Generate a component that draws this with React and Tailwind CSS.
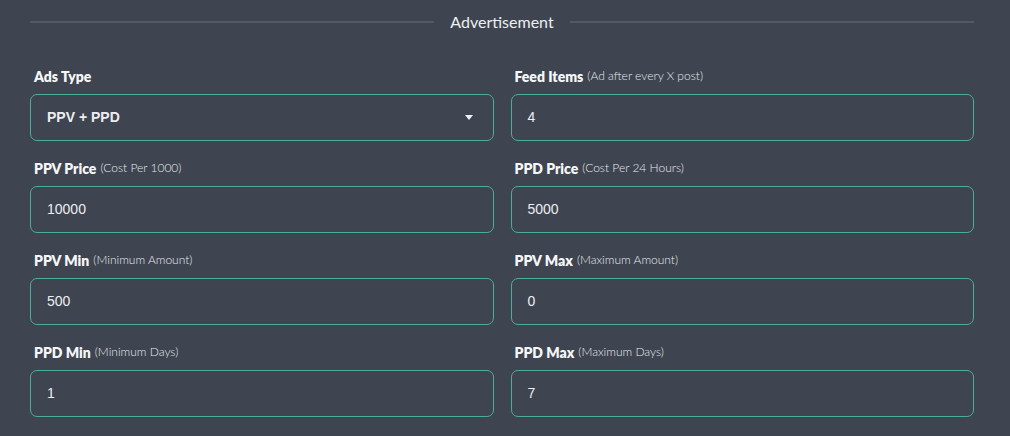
import React from "react";

const fields = [
  { label: "Ads Type", sub: null, value: "PPV + PPD", select: true },
  { label: "Feed Items", sub: "(Ad after every X post)", value: "4" },
  { label: "PPV Price", sub: "(Cost Per 1000)", value: "10000" },
  { label: "PPD Price", sub: "(Cost Per 24 Hours)", value: "5000" },
  { label: "PPV Min", sub: "(Minimum Amount)", value: "500" },
  { label: "PPV Max", sub: "(Maximum Amount)", value: "0" },
  { label: "PPD Min", sub: "(Minimum Days)", value: "1" },
  { label: "PPD Max", sub: "(Maximum Days)", value: "7" },
];

function Field({ f }) {
  return (
    <div className="flex flex-col">
      <div className="h-5 flex items-center pl-1 mb-2 whitespace-nowrap">
        <span className="text-[14px] font-extrabold text-[#f5f6f7]">{f.label}</span>
        {f.sub && (
          <span className="ml-1 text-[12px] font-light text-[#e8eaed]">{f.sub}</span>
        )}
      </div>
      <div className="h-[47px] rounded-[7px] border border-[#4dae98] flex items-center justify-between pl-4 pr-4 font-['Liberation_Sans',sans-serif] text-[14px] text-[#eceef1]">
        <span className={f.select ? "font-semibold" : ""}>{f.value}</span>
        {f.select && (
          <svg width="8" height="5" viewBox="0 0 8 5" className="mr-[4px]">
            <path d="M0 0 L8 0 L4 5 Z" fill="#f1f2f4" />
          </svg>
        )}
      </div>
    </div>
  );
}

export default function App() {
  return (
    <div className="w-[1010px] h-[436px] bg-[#3e4450] font-['Lato',sans-serif] overflow-hidden">
      <div className="pl-[30px] pr-[36px]">
        <div className="flex items-center h-6 mt-[10px] mb-8">
          <div className="flex-1 h-[2px] bg-[#525864]"></div>
          <span className="px-4 text-[16px] text-[#eef0f2]">Advertisement</span>
          <div className="flex-1 h-[2px] bg-[#525864]"></div>
        </div>
        <div className="grid grid-cols-2 gap-x-[17px] gap-y-[17px]">
          {fields.map((f) => (
            <Field key={f.label} f={f} />
          ))}
        </div>
      </div>
    </div>
  );
}
